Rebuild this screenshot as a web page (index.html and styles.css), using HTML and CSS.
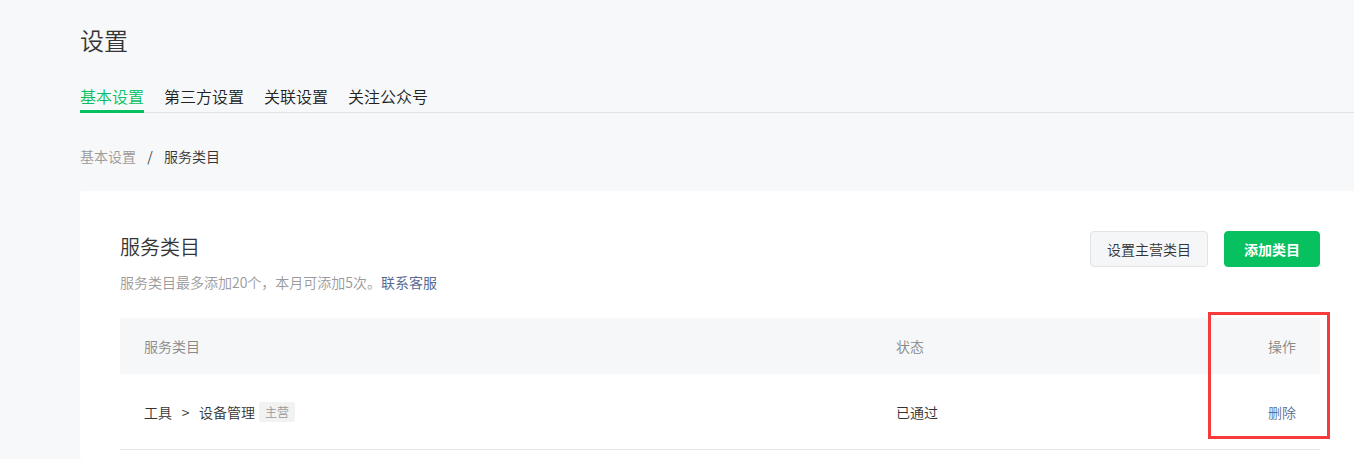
FILE: index.html
```html
<!DOCTYPE html>
<html lang="zh-CN">
<head>
<meta charset="utf-8">
<title>设置</title>
<link rel="stylesheet" href="styles.css">
</head>
<body>
<div class="page">
  <h1 class="page-title">设置</h1>
  <nav class="tabs">
    <a class="tab active">基本设置</a>
    <a class="tab">第三方设置</a>
    <a class="tab">关联设置</a>
    <a class="tab">关注公众号</a>
  </nav>
  <div class="breadcrumb">
    <span class="crumb-link">基本设置</span><span class="crumb-sep">/</span><span class="crumb-current">服务类目</span>
  </div>
  <section class="card">
    <div class="card-head">
      <div class="card-info">
        <h2 class="card-title">服务类目</h2>
        <p class="card-desc">服务类目最多添加20个，本月可添加5次。<a class="link">联系客服</a></p>
      </div>
      <div class="actions">
        <button class="btn btn-default">设置主营类目</button>
        <button class="btn btn-primary">添加类目</button>
      </div>
    </div>
    <div class="table">
      <div class="tr thead">
        <div class="td">服务类目</div>
        <div class="td">状态</div>
        <div class="td op">操作</div>
      </div>
      <div class="tr tbody">
        <div class="td">工具<span class="arrow">&gt;</span>设备管理<span class="tag">主营</span></div>
        <div class="td">已通过</div>
        <div class="td op"><a class="link">删除</a></div>
      </div>
    </div>
  </section>
</div>
<div class="highlight"></div>
</body>
</html>
```

FILE: styles.css
```css
html, body {
  margin: 0;
  padding: 0;
}
body {
  background: #f7f8fa;
  font-family: "Noto Sans CJK SC", "Noto Sans", sans-serif;
  font-weight: 350;
  color: #333;
  overflow: hidden;
  width: 1354px;
  height: 459px;
  position: relative;
}
.page {
  padding-left: 80px;
}
.page-title {
  margin: 0;
  padding-top: 23px;
  font-size: 24px;
  line-height: 34px;
  font-weight: 350;
  color: #353535;
}
.tabs {
  margin-top: 27px;
  display: flex;
  gap: 20px;
  border-bottom: 1px solid #e2e3e6;
}
.tab {
  font-size: 16px;
  line-height: 24px;
  padding-bottom: 2px;
  border-bottom: 3px solid transparent;
  margin-bottom: -1px;
  color: #222;
}
.tab.active {
  color: #07c160;
  border-bottom-color: #07c160;
}
.breadcrumb {
  margin-top: 33px;
  font-size: 14px;
  line-height: 20px;
  display: flex;
}
.crumb-link {
  color: #999;
}
.crumb-sep {
  display: inline-block;
  width: 28px;
  text-align: center;
  color: #333;
}
.crumb-current {
  color: #333;
}
.card {
  margin-top: 25px;
  width: 1280px;
  box-sizing: border-box;
  padding: 40px 40px 9px;
  background: #fff;
  border-radius: 4px;
}
.card-head {
  display: flex;
  justify-content: space-between;
  align-items: flex-start;
}
.card-title {
  margin: 0;
  font-size: 20px;
  line-height: 32px;
  font-weight: 350;
  color: #353535;
}
.card-desc {
  margin: 9px 0 0;
  font-size: 14px;
  line-height: 20px;
  color: #9a9a9a;
}
.link {
  color: #576b95;
}
.card-desc .link {
  font-weight: 400;
}
.actions {
  display: flex;
  gap: 16px;
}
.btn {
  font-family: inherit;
  font-weight: 350;
  font-size: 14px;
  height: 36px;
  border-radius: 4px;
  padding: 0 16px;
  cursor: pointer;
}
.btn-default {
  background: #f5f6f8;
  border: 1px solid #e2e3e6;
  color: #333;
}
.btn-primary {
  background: #07c160;
  border: 1px solid #07c160;
  color: #fff;
  font-weight: bold;
  padding: 0 19px;
}
.table {
  margin-top: 26px;
}
.tr {
  display: grid;
  grid-template-columns: 752px 1fr auto;
  padding: 0 24px;
  align-items: center;
  font-size: 14px;
}
.thead {
  height: 56px;
  background: #f6f7f9;
  color: #888;
}
.tbody {
  height: 75px;
  border-bottom: 1px solid #e6e6e6;
  color: #333;
}
.td {
  display: flex;
  align-items: center;
}
.op {
  justify-content: flex-end;
}
.arrow {
  display: inline-block;
  width: 27px;
  text-align: center;
}
.tag {
  margin-left: 4px;
  font-size: 12px;
  line-height: 20px;
  padding: 0 6px;
  background: #f2f2f2;
  color: #999;
  border-radius: 2px;
}
.highlight {
  position: absolute;
  left: 1208px;
  top: 312px;
  width: 122px;
  height: 127px;
  box-sizing: border-box;
  border: 3px solid #f53b3b;
}
```
